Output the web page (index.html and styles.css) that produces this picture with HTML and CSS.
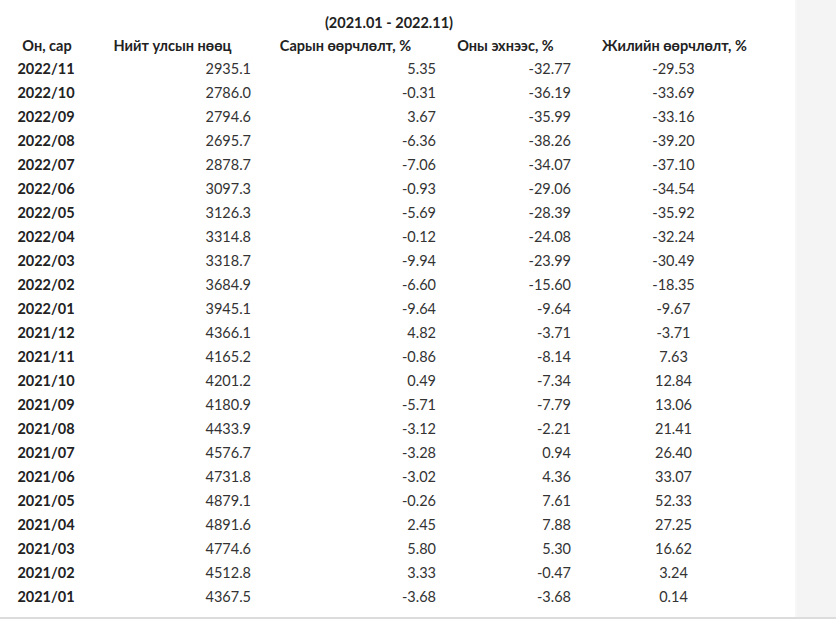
FILE: index.html
```html
<!DOCTYPE html>
<html lang="mn">
<head>
<meta charset="utf-8">
<title>Нийт улсын нөөц</title>
<link rel="stylesheet" href="styles.css">
</head>
<body>
<div class="page">
  <main class="content">
    <table class="data">
      <caption>(2021.01 - 2022.11)</caption>
      <colgroup>
        <col class="c1"><col class="c2"><col class="c3"><col class="c4"><col class="c5">
      </colgroup>
      <thead>
        <tr><th>Он, сар</th><th>Нийт улсын нөөц</th><th>Сарын өөрчлөлт, %</th><th>Оны эхнээс, %</th><th>Жилийн өөрчлөлт, %</th></tr>
      </thead>
      <tbody>
        <tr><td>2022/11</td><td>2935.1</td><td>5.35</td><td>-32.77</td><td>-29.53</td></tr>
        <tr><td>2022/10</td><td>2786.0</td><td>-0.31</td><td>-36.19</td><td>-33.69</td></tr>
        <tr><td>2022/09</td><td>2794.6</td><td>3.67</td><td>-35.99</td><td>-33.16</td></tr>
        <tr><td>2022/08</td><td>2695.7</td><td>-6.36</td><td>-38.26</td><td>-39.20</td></tr>
        <tr><td>2022/07</td><td>2878.7</td><td>-7.06</td><td>-34.07</td><td>-37.10</td></tr>
        <tr><td>2022/06</td><td>3097.3</td><td>-0.93</td><td>-29.06</td><td>-34.54</td></tr>
        <tr><td>2022/05</td><td>3126.3</td><td>-5.69</td><td>-28.39</td><td>-35.92</td></tr>
        <tr><td>2022/04</td><td>3314.8</td><td>-0.12</td><td>-24.08</td><td>-32.24</td></tr>
        <tr><td>2022/03</td><td>3318.7</td><td>-9.94</td><td>-23.99</td><td>-30.49</td></tr>
        <tr><td>2022/02</td><td>3684.9</td><td>-6.60</td><td>-15.60</td><td>-18.35</td></tr>
        <tr><td>2022/01</td><td>3945.1</td><td>-9.64</td><td>-9.64</td><td>-9.67</td></tr>
        <tr><td>2021/12</td><td>4366.1</td><td>4.82</td><td>-3.71</td><td>-3.71</td></tr>
        <tr><td>2021/11</td><td>4165.2</td><td>-0.86</td><td>-8.14</td><td>7.63</td></tr>
        <tr><td>2021/10</td><td>4201.2</td><td>0.49</td><td>-7.34</td><td>12.84</td></tr>
        <tr><td>2021/09</td><td>4180.9</td><td>-5.71</td><td>-7.79</td><td>13.06</td></tr>
        <tr><td>2021/08</td><td>4433.9</td><td>-3.12</td><td>-2.21</td><td>21.41</td></tr>
        <tr><td>2021/07</td><td>4576.7</td><td>-3.28</td><td>0.94</td><td>26.40</td></tr>
        <tr><td>2021/06</td><td>4731.8</td><td>-3.02</td><td>4.36</td><td>33.07</td></tr>
        <tr><td>2021/05</td><td>4879.1</td><td>-0.26</td><td>7.61</td><td>52.33</td></tr>
        <tr><td>2021/04</td><td>4891.6</td><td>2.45</td><td>7.88</td><td>27.25</td></tr>
        <tr><td>2021/03</td><td>4774.6</td><td>5.80</td><td>5.30</td><td>16.62</td></tr>
        <tr><td>2021/02</td><td>4512.8</td><td>3.33</td><td>-0.47</td><td>3.24</td></tr>
        <tr><td>2021/01</td><td>4367.5</td><td>-3.68</td><td>-3.68</td><td>0.14</td></tr>
      </tbody>
    </table>
  </main>
  <aside class="side"></aside>
</div>
</body>
</html>
```

FILE: styles.css
```css
html, body {
  margin: 0;
  padding: 0;
  background: #ffffff;
}

body {
  font-family: Lato, "Open Sans", "Liberation Sans", sans-serif;
  font-size: 14.5px;
  color: #333333;
}

.page {
  display: flex;
  height: 617px;
  border-bottom: 2px solid #dcdcdc;
}

.content {
  width: 795px;
  flex: none;
  background: #ffffff;
}

.side {
  flex: 1;
  background: #f4f4f4;
  border-left: 2px solid #f7f7f7;
}

.data {
  margin-left: 2px;
  width: 774px;
  table-layout: fixed;
  border-collapse: collapse;
}

.data caption {
  padding-top: 12px;
  height: 22px;
  line-height: 22px;
  font-weight: 700;
  color: #222222;
}

.c1 { width: 90px; }
.c2 { width: 161px; }
.c3 { width: 185px; }
.c4 { width: 135px; }
.c5 { width: 203px; }

.data th {
  height: 23px;
  padding: 0;
  line-height: 23px;
  font-weight: 700;
  color: #222222;
  text-align: center;
  white-space: nowrap;
}

.data td {
  height: 24px;
  padding: 0 2px 0 0;
  line-height: 24px;
  text-align: right;
  white-space: nowrap;
}

.data td:first-child {
  text-align: center;
  font-weight: 700;
  color: #222222;
}

.data td:last-child {
  text-align: center;
}
```
